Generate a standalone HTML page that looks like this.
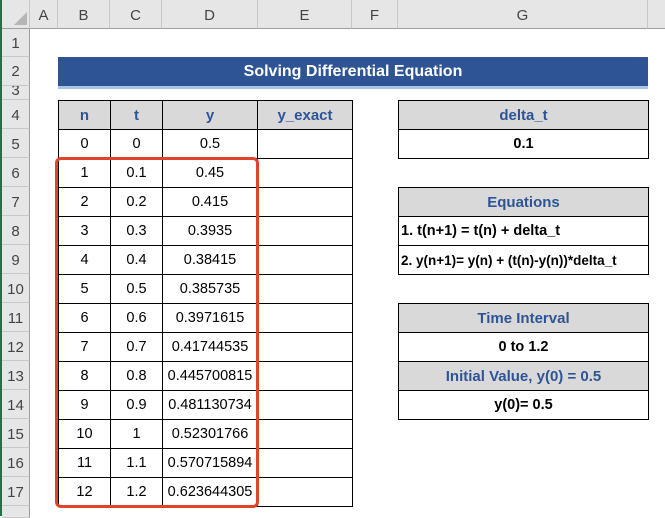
<!DOCTYPE html>
<html><head><style>
*{margin:0;padding:0;box-sizing:border-box}
body{width:665px;height:516px;overflow:hidden;background:#fff;font-family:"Liberation Sans",sans-serif;position:relative}
.a{position:absolute}
.ch{position:absolute;top:0;height:29px;background:#e6e6e6;border-right:1px solid #c8c8c8;border-bottom:1px solid #9e9e9e;color:#444;font-size:15px;text-align:center;line-height:32px}
.rh{position:absolute;left:2px;width:28px;background:#e6e6e6;border-bottom:1px solid #c8c8c8;border-right:1px solid #9e9e9e;color:#444;font-size:15px;text-align:center}
.c{position:absolute;border:1px solid #000;font-size:14.5px;text-align:center;line-height:29px;color:#000}
.h{background:#d9d9d9;color:#2f5496;font-weight:bold;font-size:15px}
.b{font-weight:bold}
</style></head><body>
<div class="a" style="left:0;top:0;width:2px;height:516px;background:#217346"></div>
<div class="ch" style="left:2px;width:28px"></div>
<div class="a" style="left:14px;top:12px;width:0;height:0;border-left:13px solid transparent;border-bottom:13px solid #b5b5b5"></div>
<div class="ch" style="left:30px;width:28px">A</div>
<div class="ch" style="left:58px;width:52px">B</div>
<div class="ch" style="left:110px;width:52px">C</div>
<div class="ch" style="left:162px;width:96px">D</div>
<div class="ch" style="left:258px;width:94px">E</div>
<div class="ch" style="left:352px;width:46px">F</div>
<div class="ch" style="left:398px;width:250px">G</div>
<div class="ch" style="left:648px;width:17px;border-right:none"></div>

<div class="rh" style="top:29px;height:28px;line-height:30px">1</div>
<div class="rh" style="top:57px;height:29px;line-height:30px">2</div>
<div class="rh" style="top:86px;height:14px;line-height:10px;overflow:hidden">3</div>
<div class="rh" style="top:100px;height:29px;line-height:32px">4</div>
<div class="rh" style="top:129px;height:29px;line-height:32px">5</div>
<div class="rh" style="top:158px;height:29px;line-height:32px">6</div>
<div class="rh" style="top:187px;height:29px;line-height:32px">7</div>
<div class="rh" style="top:216px;height:29px;line-height:32px">8</div>
<div class="rh" style="top:245px;height:29px;line-height:32px">9</div>
<div class="rh" style="top:274px;height:29px;line-height:32px">10</div>
<div class="rh" style="top:303px;height:29px;line-height:32px">11</div>
<div class="rh" style="top:332px;height:29px;line-height:32px">12</div>
<div class="rh" style="top:361px;height:29px;line-height:32px">13</div>
<div class="rh" style="top:390px;height:29px;line-height:32px">14</div>
<div class="rh" style="top:419px;height:29px;line-height:32px">15</div>
<div class="rh" style="top:448px;height:29px;line-height:32px">16</div>
<div class="rh" style="top:477px;height:29px;line-height:32px">17</div>
<div class="rh" style="top:506px;height:12px"></div>

<div class="a" style="left:58px;top:57px;width:590px;height:29px;background:#2f5496;color:#fff;font-weight:bold;font-size:16px;text-align:center;line-height:30px">Solving Differential Equation</div>
<div class="a" style="left:58px;top:86px;width:590px;height:3px;background:#a9c4e8"></div>

<div id="t"></div>
<script>
var rows=[["n","t","y"],["0","0","0.5"],["1","0.1","0.45"],["2","0.2","0.415"],["3","0.3","0.3935"],["4","0.4","0.38415"],["5","0.5","0.385735"],["6","0.6","0.3971615"],["7","0.7","0.41744535"],["8","0.8","0.445700815"],["9","0.9","0.481130734"],["10","1","0.52301766"],["11","1.1","0.570715894"],["12","1.2","0.623644305"]];
var xs=[58,110,162,257,352],out="";
for(var i=0;i<rows.length;i++){var yy=100+i*29;var r=rows[i].concat([i==0?"y_exact":""]);
for(var j=0;j<4;j++){out+='<div class="c'+(i==0?' h':'')+'" style="left:'+xs[j]+'px;top:'+yy+'px;width:'+(xs[j+1]-xs[j]+1)+'px;height:30px">'+r[j]+'</div>';}}
document.getElementById('t').outerHTML=out;
</script>

<div class="c h" style="left:398px;top:100px;width:251px;height:30px">delta_t</div>
<div class="c b" style="left:398px;top:129px;width:251px;height:30px">0.1</div>
<div class="c h" style="left:398px;top:187px;width:251px;height:30px">Equations</div>
<div class="c b" style="left:398px;top:216px;width:251px;height:30px;text-align:left;padding-left:2px">1. t(n+1) = t(n) + delta_t</div>
<div class="c b" style="left:398px;top:245px;width:251px;height:30px;text-align:left;padding-left:2px;font-size:13.5px">2. y(n+1)= y(n) + (t(n)-y(n))*delta_t</div>
<div class="c h" style="left:398px;top:303px;width:251px;height:30px">Time Interval</div>
<div class="c b" style="left:398px;top:332px;width:251px;height:30px">0 to 1.2</div>
<div class="c h" style="left:398px;top:361px;width:251px;height:30px">Initial Value, y(0) = 0.5</div>
<div class="c b" style="left:398px;top:390px;width:251px;height:30px">y(0)= 0.5</div>

<div class="a" style="left:55px;top:157px;width:204px;height:351px;border:3px solid #e0442b;border-radius:6px"></div>
</body></html>
